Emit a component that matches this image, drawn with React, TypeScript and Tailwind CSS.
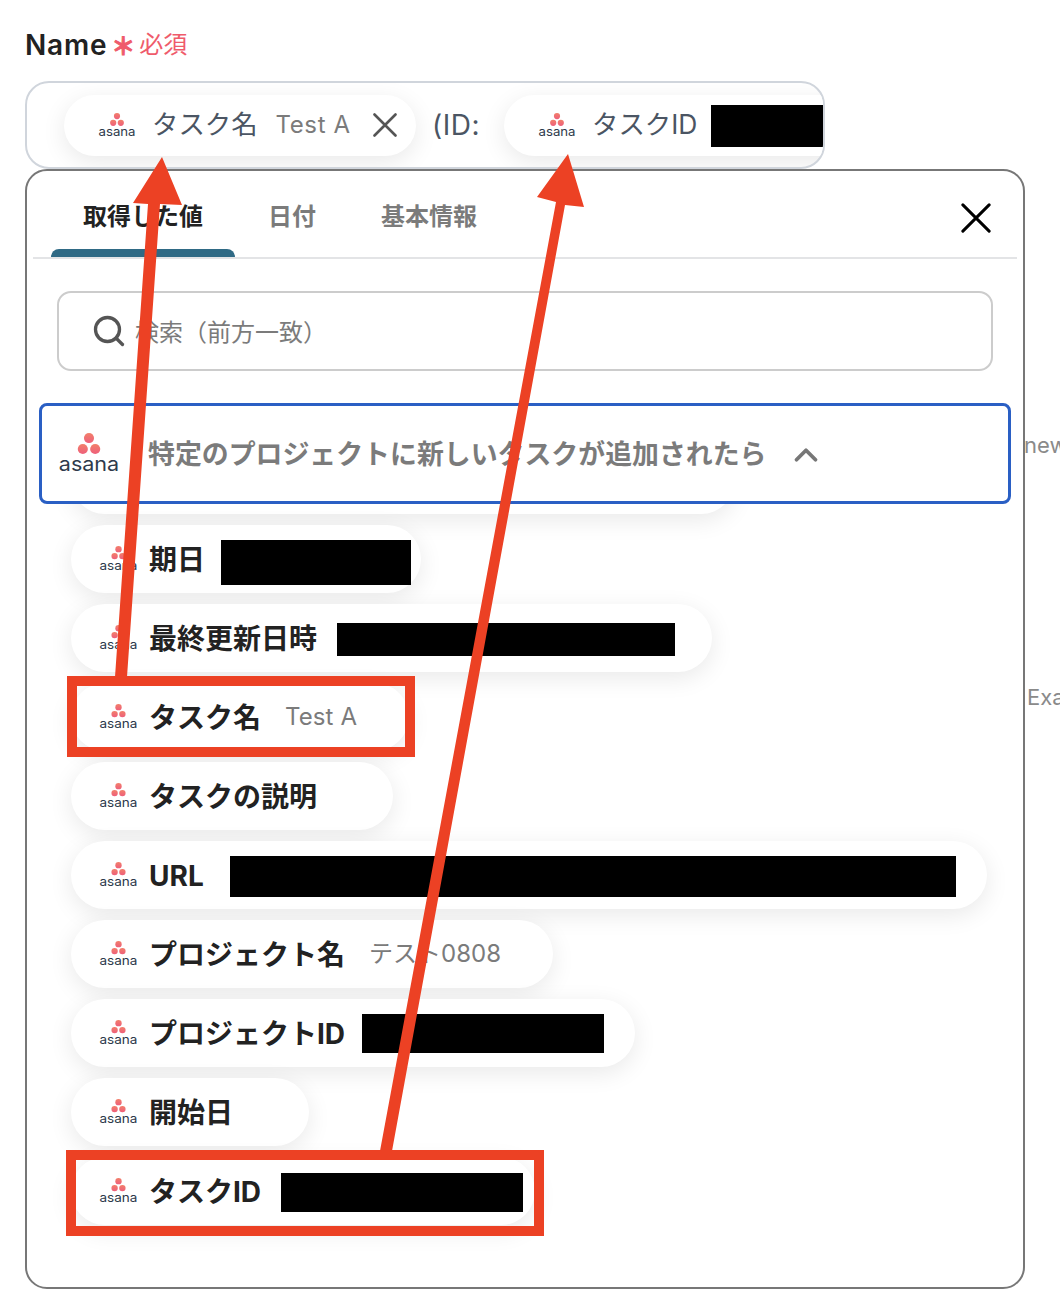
import { ChevronUp, Search } from 'lucide-react';
import type { ReactNode } from 'react';

const FONT = "font-['Inter','Noto_Sans_CJK_JP',sans-serif]";
const SHADOW = 'shadow-[0_6px_24px_rgba(0,0,0,0.09)]';

function AsanaLogo({ className }: { className: string }) {
  return (
    <svg viewBox="0 0 38 25" className={`shrink-0 overflow-visible ${className}`}>
      <defs>
        <linearGradient id="asana-dots" x1="0" y1="0" x2="0" y2="1">
          <stop offset="0" stopColor="#f2806a" />
          <stop offset="1" stopColor="#ee5f7b" />
        </linearGradient>
      </defs>
      <circle cx="19" cy="3.1" r="3.1" fill="url(#asana-dots)" />
      <circle cx="15.2" cy="9.8" r="3.1" fill="url(#asana-dots)" />
      <circle cx="22.8" cy="9.8" r="3.1" fill="url(#asana-dots)" />
      <text
        x="0.5"
        y="23.2"
        textLength="37"
        lengthAdjust="spacingAndGlyphs"
        fontSize="12"
        fill="#2e3a4b"
        fontFamily="Inter, sans-serif"
      >
        asana
      </text>
    </svg>
  );
}

function CloseIcon({ className, strokeWidth }: { className: string; strokeWidth: number }) {
  return (
    <svg viewBox="0 0 24 24" fill="none" stroke="currentColor" strokeWidth={strokeWidth} strokeLinecap="round" className={`shrink-0 ${className}`}>
      <path d="M1.5 1.5 22.5 22.5M22.5 1.5 1.5 22.5" />
    </svg>
  );
}

function Redacted({ className }: { className: string }) {
  return <div className={`shrink-0 bg-black ${className}`} />;
}

function Sample({ children, className = '' }: { children: ReactNode; className?: string }) {
  return <span className={`text-[24px] font-normal text-[#7b7b7b] ${className}`}>{children}</span>;
}

const rows: { label: string; width: string; value?: ReactNode }[] = [
  { label: '期日', width: 'w-[350px]', value: <Redacted className="ml-[16px] mt-[6px] h-[45px] w-[190px]" /> },
  { label: '最終更新日時', width: 'w-[641px]', value: <Redacted className="ml-[20px] mt-[3px] h-[33px] w-[338px]" /> },
  { label: 'タスク名', width: 'w-[338px]', value: <Sample className="ml-[24px] tracking-[0.1px]">Test A</Sample> },
  { label: 'タスクの説明', width: 'w-[322px]' },
  { label: 'URL', width: 'w-[916px]', value: <Redacted className="ml-[26px] mt-[3px] h-[41px] w-[726px]" /> },
  { label: 'プロジェクト名', width: 'w-[482px]', value: <Sample className="ml-[24px]">テスト0808</Sample> },
  { label: 'プロジェクトID', width: 'w-[564px]', value: <Redacted className="ml-[17px] mt-px h-[39px] w-[242px]" /> },
  { label: '開始日', width: 'w-[238px]' },
  { label: 'タスクID', width: 'w-[464px]', value: <Redacted className="ml-[20px] mt-[3px] h-[39px] w-[242px]" /> },
];

export default function App() {
  return (
    <div className={`relative h-[1302px] w-[1060px] overflow-hidden bg-white pl-[25px] pt-[27px] ${FONT}`}>
      {/* label */}
      <div className="flex h-[36px] items-center">
        <span className="text-[28px] font-semibold tracking-[0.8px] text-[#222]">Name</span>
        <span className="ml-[4px] mt-[4px] text-[24px] font-bold leading-none text-[#ef5b6b] [-webkit-text-stroke:1px_#ef5b6b]">＊</span>
        <span className="ml-[4px] text-[24px] text-[#ef5b6b]">必須</span>
      </div>

      {/* field with chips */}
      <div className="mt-[18px] flex h-[88px] w-[800px] items-center overflow-hidden rounded-[24px] border-2 border-[#d0d5dc] pl-[37px]">
        <div className={`flex h-[61px] w-[352px] shrink-0 items-center rounded-[31px] bg-white pl-[34px] ${SHADOW}`}>
          <AsanaLogo className="w-[38px]" />
          <span className="ml-[16px] text-[26.4px] text-[#4b5563]">タスク名</span>
          <Sample className="ml-[18px] tracking-[0.6px]">Test A</Sample>
          <CloseIcon className="ml-[22px] size-[24px] text-[#555]" strokeWidth={2.6} />
        </div>
        <span className="ml-[16px] w-[56px] shrink-0 text-[28px] tracking-[0.5px] text-[#4b5563]">(ID:</span>
        <div className={`ml-[16px] flex h-[61px] w-[360px] shrink-0 items-center rounded-[31px] bg-white pl-[34px] ${SHADOW}`}>
          <AsanaLogo className="w-[38px]" />
          <span className="ml-[16px] text-[26.4px] text-[#4b5563]">タスクID</span>
          <Redacted className="ml-[14px] mt-[2px] h-[42px] w-[112px]" />
        </div>
      </div>

      {/* popup */}
      <div className="h-[1120px] w-[1000px] overflow-hidden rounded-[22px] border-2 border-[#777] bg-white">
        <div className="mx-[6px] flex items-end justify-between border-b-2 border-[#e3e4e6] pl-[18px] pr-[26px]">
          <div className="flex items-end">
            <div className="flex h-[86px] flex-col items-center justify-end">
              <span className="mb-[14px] px-[32px] text-[24px] font-bold text-[#222]">取得した値</span>
              <div className="h-[8px] w-full rounded-t-[8px] bg-[#2f6a85]" />
            </div>
            <span className="mb-[22px] px-[33px] text-[24px] font-bold text-[#7b7b7b]">日付</span>
            <span className="mb-[22px] px-[32px] text-[24px] font-bold text-[#7b7b7b]">基本情報</span>
          </div>
          <CloseIcon className="mb-[24px] size-[30px] text-black" strokeWidth={2.4} />
        </div>

        <div className="ml-[30px] mt-[32px] flex h-[80px] w-[936px] items-center rounded-[14px] border-2 border-[#ccc] pl-[32px]">
          <Search className="size-[36px] text-[#555]" strokeWidth={2.2} />
          <span className="ml-[8px] mt-[3px] text-[24px] text-[#7b7b7b]">検索（前方一致）</span>
        </div>

        <div className="relative z-10 ml-[12px] mt-[32px] flex h-[101px] w-[972px] items-center rounded-[8px] border-[3px] border-[#2a5fc4] bg-white pl-[16px]">
          <AsanaLogo className="w-[62px]" />
          <span className="ml-[28px] mt-[2px] text-[26.9px] font-bold text-[#7b7b7b]">特定のプロジェクトに新しいタスクが追加されたら</span>
          <ChevronUp className="ml-[21px] mt-[2px] size-[38px] text-[#777]" strokeWidth={2.4} />
        </div>

        <div className="-mt-[58px] flex flex-col gap-[11px] pl-[44px]">
          <div className={`h-[68px] w-[664px] rounded-[34px] bg-white ${SHADOW}`} />
          {rows.map((row) => (
            <div key={row.label} className={`flex h-[68px] items-center rounded-[34px] bg-white pl-[28px] ${row.width} ${SHADOW}`}>
              <AsanaLogo className="w-[39px]" />
              <span className="ml-[11px] whitespace-nowrap pt-[2px] text-[28px] font-bold text-[#222]">{row.label}</span>
              {row.value}
            </div>
          ))}
        </div>
      </div>

      {/* text of the page behind the popup */}
      <span className="absolute left-[1024px] top-[429px] text-[22px] text-[#8a8a8a]">new</span>
      <span className="absolute left-[1027px] top-[681px] text-[22px] text-[#8a8a8a]">Exa</span>

      {/* red annotations */}
      <div className="absolute left-[67px] top-[676px] z-20 h-[81px] w-[348px] border-[10px] border-[#ec4124]" />
      <div className="absolute left-[66px] top-[1150px] z-20 h-[86px] w-[478px] border-[10px] border-[#ec4124]" />
      <svg className="pointer-events-none absolute left-0 top-0 z-20" width="1060" height="1302">
        <polygon fill="#ec4124" points="115,677 127,677 160,204 182,205 162,157 133,203 148,204" />
        <polygon fill="#ec4124" points="380,1151 392,1151 565,205 584,207 568,154 537,197 556,202" />
      </svg>
    </div>
  );
}
